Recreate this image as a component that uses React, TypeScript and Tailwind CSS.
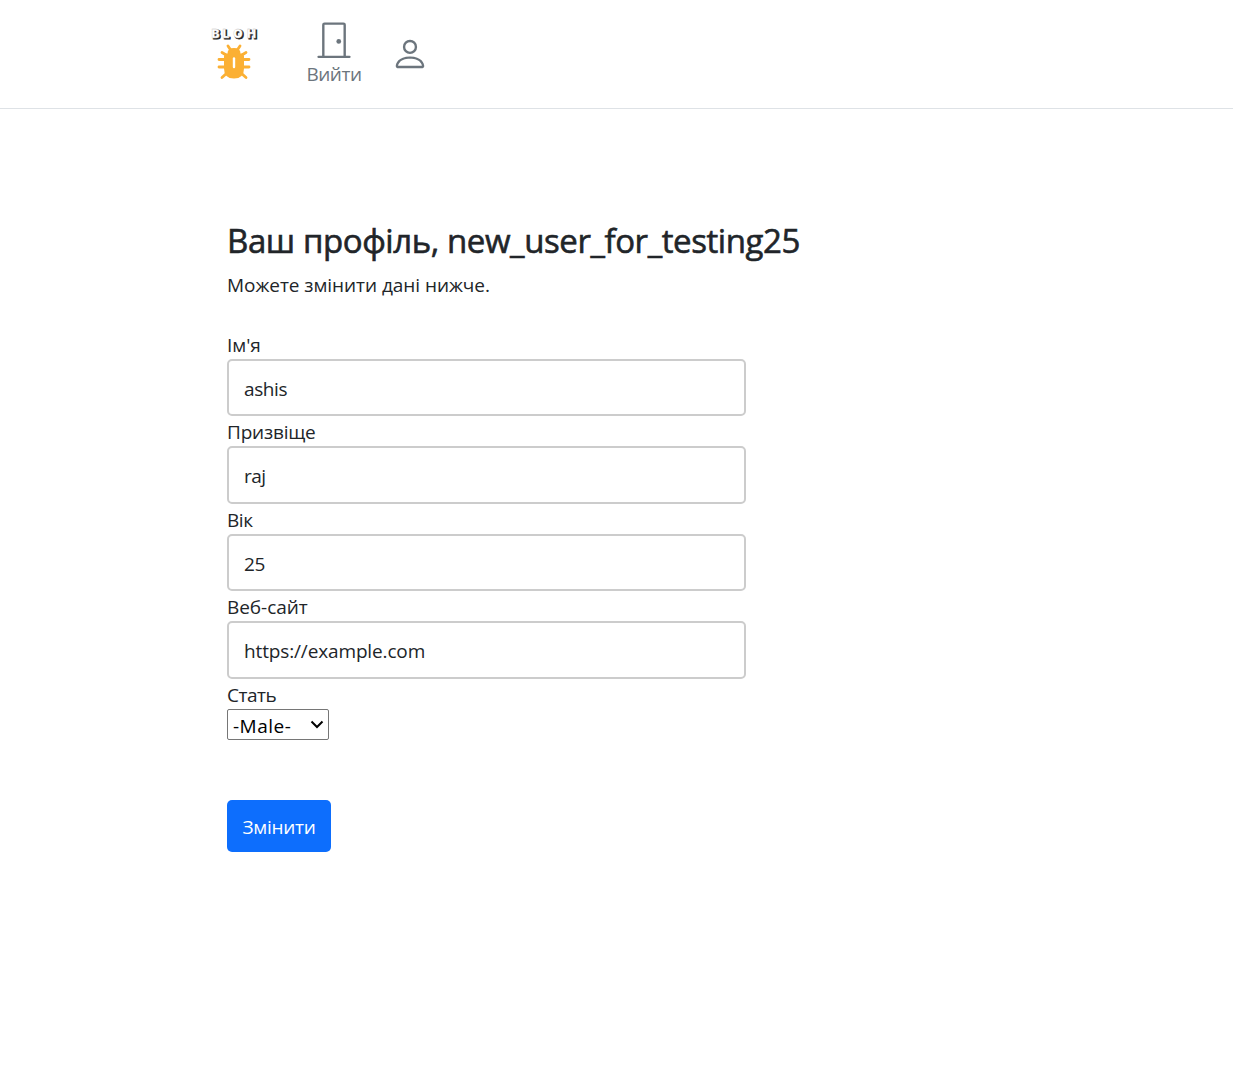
import { BsDoorClosed, BsPerson } from "react-icons/bs";

const fields = [
  { label: "Ім'я", value: "ashis", ls: "tracking-[-0.05px]", vs: "tracking-[-0.4px] pt-[2px]" },
  { label: "Призвіще", value: "raj", ls: "tracking-[-0.2px]", vs: "tracking-[-0.5px] pt-[2px]" },
  { label: "Вік", value: "25", ls: "tracking-[-0.4px]", vs: "tracking-[-0.3px] pt-[3px]" },
  { label: "Веб-сайт", value: "https://example.com", ls: "tracking-[-0.05px]", vs: "tracking-[-0.14px] pt-[2px]" },
];

function Logo() {
  return (
    <svg width="52" height="60" viewBox="0 0 52 60" className="block">
      <g fontFamily="Inter, sans-serif" fontWeight="900" fontSize="12">
        <text x="4.8 15.8 26.4 40.2" y="17.800" fill="#222" stroke="#222" strokeWidth="0.8">BLOH</text>
        <text x="3.6 14.6 25.2 39" y="16.600" fill="#fff" stroke="#bbb" strokeWidth="0.300">BLOH</text>
      </g>
      <g stroke="#fbb034" strokeWidth="2.800" strokeLinecap="round" fill="none">
        <path d="M20 25l3 4.500M32 25l-3 4.500M14 31.500l5 3M38 31.500l-5 3M11 38.500h8M33 38.500h8M11 46h8M33 46h8M14 56.500l5-4.500M38 56.500l-5-4.500" />
      </g>
      <path d="M19.500 32.500q0-5.500 6.500-5.500t6.500 5.500q3.500 0 3.500 3v12q0 10-10 10t-10-10v-12q0-3 3.500-3z" fill="#fbb034" />
      <path d="M26 37.500v8.500" stroke="#fff" strokeWidth="2.400" strokeLinecap="round" />
    </svg>
  );
}

export default function App() {
  return (
    <div className="min-h-[1085px] bg-white font-['Open_Sans','Noto_Sans',sans-serif] text-[19px] leading-[30px] text-[#212529]">
      <header className="flex h-[109px] items-start border-b border-[#dee2e6] pl-[208px] text-[#6c757d]">
        <a href="#" className="mt-[21px]"><Logo /></a>
        <a href="#" className="ml-[47px] mt-5 flex w-[54px] flex-col items-center">
          <BsDoorClosed size={38} />
          <span className="mt-[1px] whitespace-nowrap tracking-[-0.5px]">Вийти</span>
        </a>
        <a href="#" className="ml-[30px] mt-[35px]"><BsPerson size={38} /></a>
      </header>
      <main className="pl-[227px] pt-[111px]">
        <h1 className="whitespace-nowrap text-[33px] font-normal leading-[42px] tracking-[-0.42px] [-webkit-text-stroke:0.6px_#212529]">Ваш профіль, new_user_for_testing25</h1>
        <p className="mt-2 tracking-[-0.05px]">Можете змінити дані нижче.</p>
        <form className="mt-[30px]" onSubmit={(e) => e.preventDefault()}>
          {fields.map((f) => (
            <label key={f.label} className="block h-[87.4px] w-[519px]">
              <span className={`block h-[29px] ${f.ls}`}>{f.label}</span>
              <input defaultValue={f.value} className={`block h-[57.4px] w-full rounded-[5px] border-2 border-[#ccc] px-[15px] outline-none ${f.vs}`} />
            </label>
          ))}
          <label className="block">
            <span className="block h-[29.4px] tracking-[-0.5px]">Стать</span>
            <span className="relative block h-[31px] w-[102px]">
              <select defaultValue="m" className="h-full w-full appearance-none rounded-[2px] border border-[#767676] bg-white pl-[5px] pt-[1px] text-black tracking-[0.5px]">
                <option value="m">-Male-</option>
              </select>
              <svg className="pointer-events-none absolute right-[5px] top-[11px]" width="14" height="10" viewBox="0 0 14 10" fill="none" stroke="#000" strokeWidth="2">
                <path d="M1.500 1.500l5.500 5.500 5.500-5.500" />
              </svg>
            </span>
          </label>
          <button className="mt-[60px] block h-[52px] w-[104px] rounded-[5px] bg-[#0d6efd] pt-[2px] text-white tracking-[-0.3px]">Змінити</button>
        </form>
      </main>
    </div>
  );
}
